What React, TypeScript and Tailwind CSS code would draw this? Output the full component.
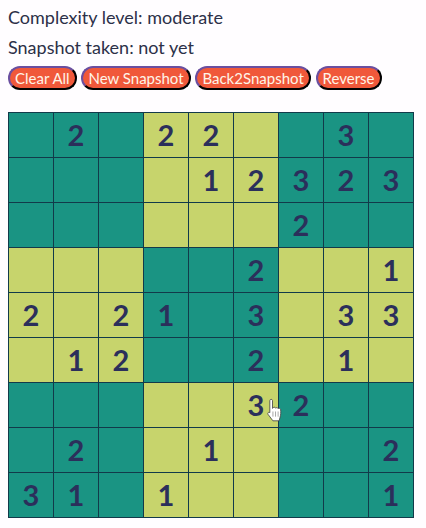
const rows = [
  '.2.22..3.',
  '....12323',
  '......2..',
  '.....2..1',
  '2.21.3.33',
  '.12..2.1.',
  '.....32..',
  '.2..1...2',
  '31.1....1',
];

const buttons = ['Clear All', 'New Snapshot', 'Back2Snapshot', 'Reverse'];

// 3x3 blocks alternate between teal and yellow
const isYellow = (r: number, c: number) => (Math.floor(r / 3) + Math.floor(c / 3)) % 2 === 1;

const Cursor = () => (
  <svg className="absolute left-[266px] top-[398px]" width="18" height="28" viewBox="0 0 17 27">
    <path
      d="M3.5 2.500c0-1.600 2.600-1.600 2.600 0v7.500l.6-.4c.4-1 2-1 2.400.2.6-.8 2-.7 2.400.4.8-.6 2.200-.2 2.400 1 .3 2.600.2 5-.5 7.300l-.9 3.500H6.500L1.800 15.800c-.9-1.300.7-2.700 1.700-1.600V2.500z"
      fill="#fff"
      stroke="#444"
      strokeWidth="0.800"
    />
    <path d="M6.500 13v5M9 13v5M11.500 13v5" stroke="#888" strokeWidth="0.700" />
  </svg>
);

export default function App() {
  return (
    <div className="relative min-h-[528px] w-[426px] bg-[#fffdff] px-2 pt-[7px] font-['Lato','Noto_Sans',sans-serif] text-[#2c3048]">
      <p className="h-[30px] text-[18px] leading-[20px]">Complexity level: moderate</p>
      <p className="h-[29px] text-[18px] leading-[20px]">Snapshot taken: not yet</p>
      <div className="flex gap-[4.800px]">
        {buttons.map((label) => (
          <button
            key={label}
            type="button"
            className="h-[24px] rounded-full border-2 border-t-[#6a4fa0] border-l-[#6a4fa0] border-r-black border-b-black bg-[#f0583a] px-[5px] text-[15px] leading-[18px] text-[#fff4e8]"
          >
            {label}
          </button>
        ))}
      </div>
      <div className="mt-[22px] grid w-[406px] grid-cols-[repeat(9,45px)] grid-rows-[repeat(9,45px)] border-t border-l border-[#123a4a]">
        {rows.map((row, r) =>
          row.split('').map((ch, c) => (
            <div
              key={`${r}-${c}`}
              className={`flex items-center justify-center border-r border-b border-[#123a4a] text-[29px] font-bold text-[#2b2f5b] ${
                isYellow(r, c) ? 'bg-[#c7d46c]' : 'bg-[#1a9483]'
              }`}
            >
              {ch === '.' ? '' : ch}
            </div>
          )),
        )}
      </div>
      <Cursor />
    </div>
  );
}
